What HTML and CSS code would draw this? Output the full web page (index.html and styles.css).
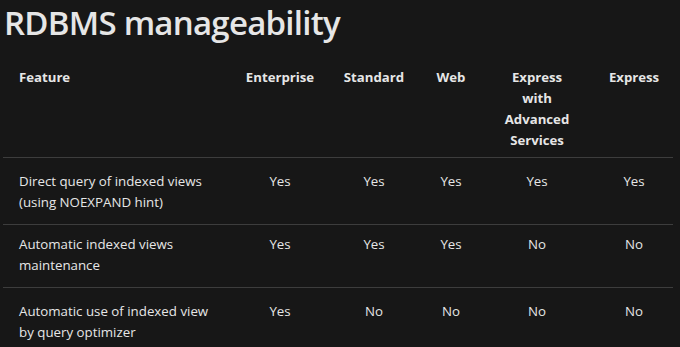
FILE: index.html
```html
<!DOCTYPE html>
<html lang="en">
<head>
<meta charset="utf-8">
<title>RDBMS manageability</title>
<link rel="stylesheet" href="styles.css">
</head>
<body>
<main class="page">
  <h1 class="title">RDBMS manageability</h1>
  <table class="matrix">
    <colgroup>
      <col class="c-feature">
      <col class="c-ent">
      <col class="c-std">
      <col class="c-web">
      <col class="c-exa">
      <col class="c-exp">
    </colgroup>
    <thead>
      <tr>
        <th class="feature">Feature</th>
        <th>Enterprise</th>
        <th>Standard</th>
        <th>Web</th>
        <th class="narrow">Express with Advanced Services</th>
        <th>Express</th>
      </tr>
    </thead>
    <tbody>
      <tr>
        <td class="feature">Direct query of indexed views (using NOEXPAND hint)</td>
        <td>Yes</td><td>Yes</td><td>Yes</td><td>Yes</td><td>Yes</td>
      </tr>
      <tr class="tight">
        <td class="feature">Automatic indexed views maintenance</td>
        <td>Yes</td><td>Yes</td><td>Yes</td><td>No</td><td>No</td>
      </tr>
      <tr>
        <td class="feature">Automatic use of indexed view by query optimizer</td>
        <td>Yes</td><td>No</td><td>No</td><td>No</td><td>No</td>
      </tr>
    </tbody>
  </table>
</main>
</body>
</html>
```
FILE: styles.css
```css
html, body {
  margin: 0;
  padding: 0;
  background: #171717;
}
body {
  color: #e6e6e6;
  font-family: "Open Sans", "Noto Sans", sans-serif;
  font-size: 14px;
}
.page {
  padding: 0 7px 0 3px;
}
.title {
  margin: 0;
  padding-left: 1px;
  font-size: 33px;
  font-weight: 600;
  line-height: 45px;
  letter-spacing: -0.75px;
  color: #e6e6e6;
}
.matrix {
  margin-top: 14px;
  width: 670px;
  table-layout: fixed;
  border-collapse: collapse;
}
.c-feature { width: 232px; }
.c-ent { width: 90px; }
.c-std { width: 98px; }
.c-web { width: 56px; }
.c-exa { width: 116px; }
.c-exp { width: 78px; }
.matrix th {
  font-weight: 700;
  font-size: 13.2px;
  line-height: 21px;
  text-align: center;
  vertical-align: top;
  padding: 8px 4px 6px;
}
.matrix th.narrow {
  padding-left: 18px;
  padding-right: 18px;
}
.matrix th.feature,
.matrix td.feature {
  text-align: left;
  padding-left: 16px;
  padding-right: 12px;
}
.matrix td {
  font-size: 13.3px;
  line-height: 21px;
  text-align: center;
  vertical-align: top;
  padding: 13px 4px 11px;
  border-top: 1px solid #3d3d3d;
}
.matrix tr.tight td {
  padding-top: 9px;
}
```
